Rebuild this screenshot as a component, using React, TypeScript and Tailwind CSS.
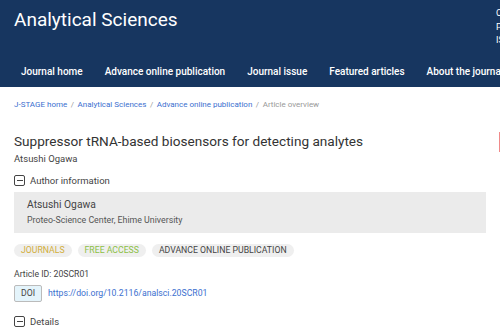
import React from 'react'

const navItems = ['Journal home', 'Advance online publication', 'Journal issue', 'Featured articles', 'About the journal']

function ToggleBox() {
  return (
    <span className="w-[11px] h-[11px] border border-[#444] rounded-[2px] flex items-center justify-center shrink-0">
      <span className="w-[6px] h-[1px] bg-[#444]" />
    </span>
  )
}

export default function App() {
  return (
    <div className="w-[500px] h-[328px] overflow-hidden bg-white font-['Roboto',sans-serif] text-[#333]">
      {/* Header */}
      <header className="bg-[#173660] h-[87px] flex flex-col">
        <div className="flex justify-between">
          <h1 className="text-white text-[19px] leading-none pl-[14px] pt-[10px]">Analytical Sciences</h1>
          <div className="text-white text-[9px] leading-[13.5px] pt-[7px] w-[4px] overflow-hidden whitespace-nowrap">
            <div>Online</div>
            <div>Print</div>
            <div>ISSN</div>
          </div>
        </div>
        <nav className="mt-auto mb-[8px] flex gap-[22px] pl-[21px] whitespace-nowrap">
          {navItems.map((n) => (
            <span key={n} className="text-white text-[10px] font-medium">{n}</span>
          ))}
        </nav>
      </header>

      <main className="px-[14px] relative">
        {/* Breadcrumb */}
        <div className="pt-[14px] text-[8px] text-[#3b6fcf] flex gap-[3.5px] leading-none">
          <span>J-STAGE home</span><span className="text-[#999]">/</span>
          <span>Analytical Sciences</span><span className="text-[#999]">/</span>
          <span>Advance online publication</span><span className="text-[#999]">/</span>
          <span className="text-[#999]">Article overview</span>
        </div>

        <h2 className="mt-[24px] text-[13.6px] text-[#333] leading-tight">
          Suppressor tRNA-based biosensors for detecting analytes
        </h2>
        <div className="mt-[3px] text-[9.5px] text-[#444] leading-tight">Atsushi Ogawa</div>

        <div className="mt-[10px] flex items-center gap-[5px] text-[9.5px] text-[#444] leading-tight">
          <ToggleBox />
          <span>Author information</span>
        </div>

        <div className="mt-[5px] bg-[#ebebeb] h-[41px] pl-[13px] pt-[7px]">
          <div className="text-[10.3px] text-[#444] leading-tight">Atsushi Ogawa</div>
          <div className="text-[8.8px] text-[#555] mt-[3px] leading-tight">Proteo-Science Center, Ehime University</div>
        </div>

        <div className="mt-[11px] flex gap-[6px] text-[8.7px] leading-none">
          <span className="bg-[#efefef] rounded-full px-[7px] py-[2.5px] text-[#d2ae3a]">JOURNALS</span>
          <span className="bg-[#efefef] rounded-full px-[7px] py-[2.5px] text-[#8cbf45]">FREE ACCESS</span>
          <span className="bg-[#efefef] rounded-full px-[7px] py-[2.5px] text-[#444]">ADVANCE ONLINE PUBLICATION</span>
        </div>

        <div className="mt-[13px] text-[8.7px] text-[#444] leading-none">Article ID: 20SCR01</div>

        <div className="mt-[6px] flex items-center gap-[6px] text-[8.7px] leading-none">
          <span className="bg-[#e4f4fb] border border-[#bbb] rounded-[2px] px-[6px] py-[3px] text-[#444]">DOI</span>
          <span className="text-[#3b6fcf]">https://doi.org/10.2116/analsci.20SCR01</span>
        </div>

        <div className="mt-[14px] flex items-center gap-[5px] text-[9.5px] text-[#444] leading-tight">
          <ToggleBox />
          <span>Details</span>
        </div>

        <span className="absolute right-0 top-[45px] w-[1px] h-[20px] bg-[#f08a8a]" />
      </main>
    </div>
  )
}
